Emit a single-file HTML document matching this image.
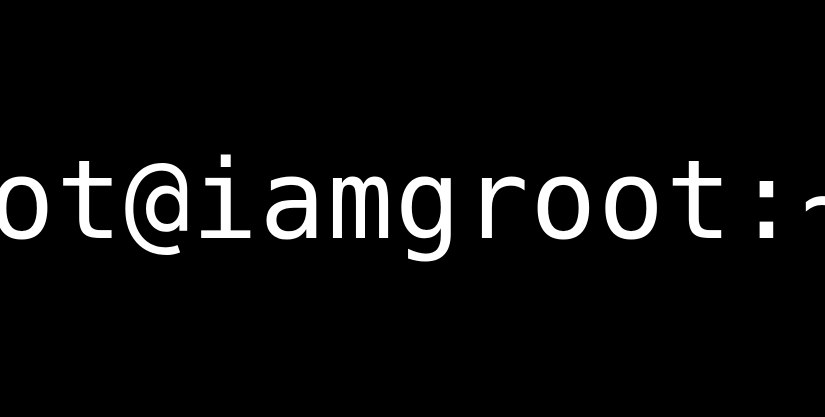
<!DOCTYPE html>
<html><head><style>
html,body{margin:0;padding:0;background:#000;width:825px;height:417px;overflow:hidden;position:relative}
.t{position:absolute;left:-147px;top:145px;font-family:"DejaVu Sans Mono","Liberation Mono",monospace;font-size:110px;line-height:110px;letter-spacing:1.5px;color:#fff;white-space:pre}
</style></head><body>
<div class="t">root@iamgroot:~</div>
</body></html>
